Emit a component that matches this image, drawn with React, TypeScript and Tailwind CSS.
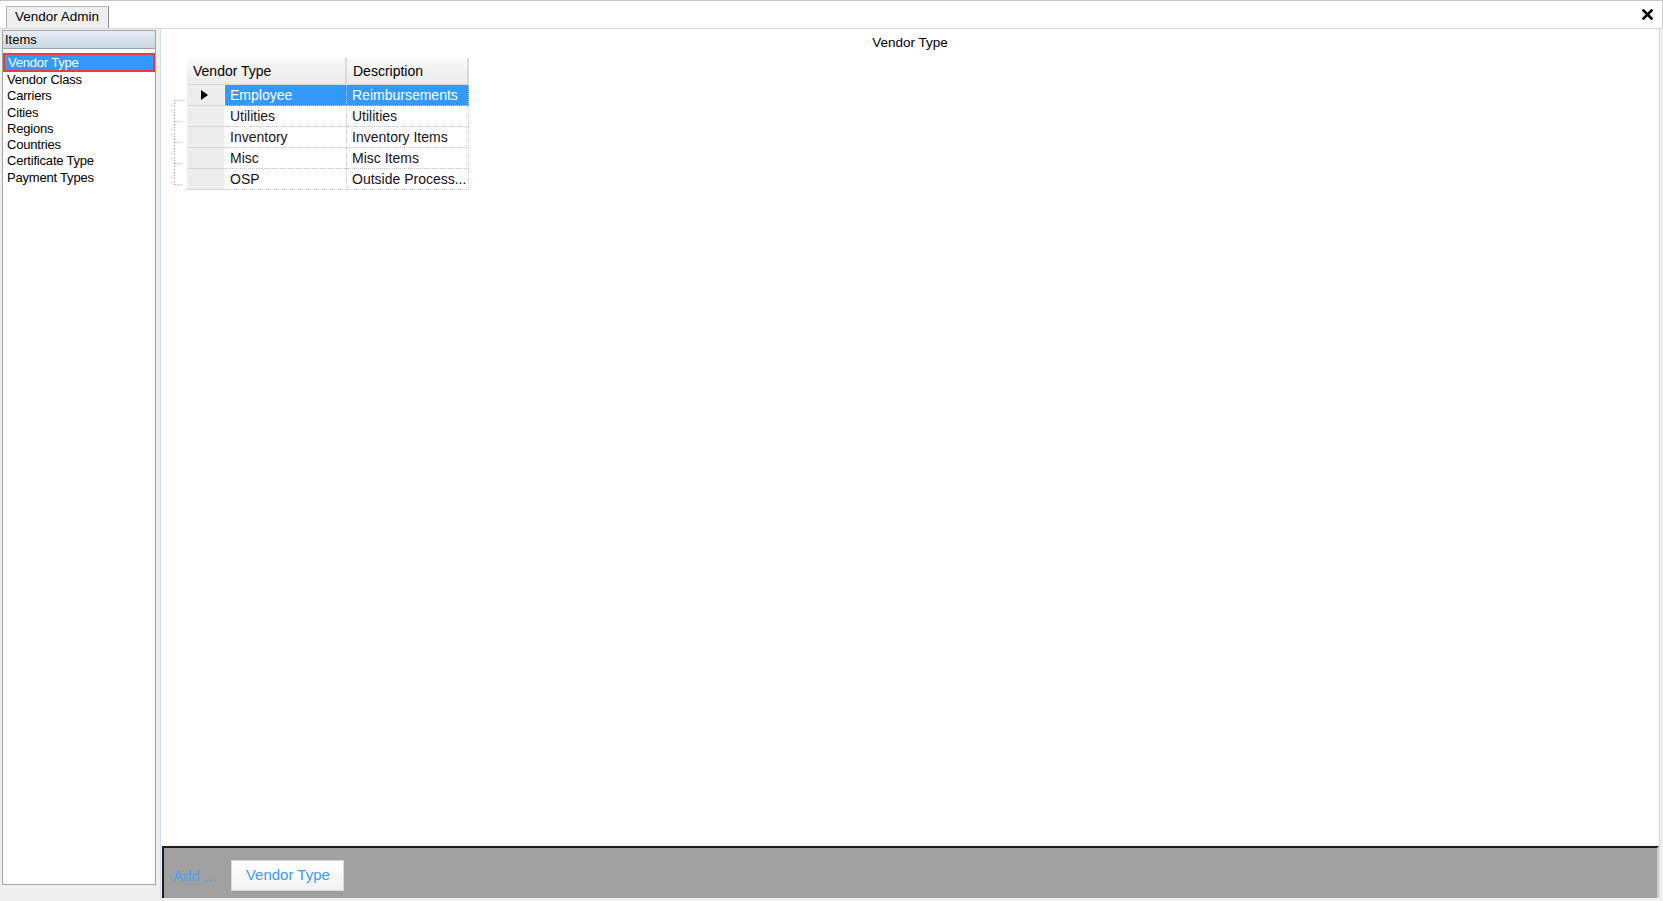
import React from 'react';

const items = [
  'Vendor Type',
  'Vendor Class',
  'Carriers',
  'Cities',
  'Regions',
  'Countries',
  'Certificate Type',
  'Payment Types',
];

const rows = [
  { type: 'Employee', desc: 'Reimbursements' },
  { type: 'Utilities', desc: 'Utilities' },
  { type: 'Inventory', desc: 'Inventory Items' },
  { type: 'Misc', desc: 'Misc Items' },
  { type: 'OSP', desc: 'Outside Process...' },
];

function TreeLines() {
  return (
    <svg width="14" height="110" className="mt-[37px] shrink-0" viewBox="0 0 14 110">
      <g stroke="#9a9a9a" strokeWidth="1" strokeDasharray="1 2" fill="none">
        <line x1="1.5" y1="5" x2="1.5" y2="90" />
        <line x1="1.5" y1="5.5" x2="13" y2="5.5" />
        <line x1="1.5" y1="26.5" x2="9" y2="26.5" />
        <line x1="1.5" y1="47.5" x2="9" y2="47.5" />
        <line x1="1.5" y1="68.5" x2="9" y2="68.5" />
        <line x1="1.5" y1="89.5" x2="9" y2="89.5" />
      </g>
    </svg>
  );
}

export default function App() {
  return (
    <div
      className="w-[1663px] h-[901px] flex flex-col bg-white border-t border-[#c4c4c4] text-black overflow-hidden"
      style={{ fontFamily: '"Liberation Sans", Arial, sans-serif' }}
    >
      {/* Tab strip */}
      <div className="h-[27px] flex items-end justify-between pl-[6px] pr-[9px] border-r border-[#cfcfcf]">
        <div className="h-[22px] w-[103px] bg-[#f0f0f0] border border-b-0 border-[#b4b4b4] border-r-[#8c8c8c] flex items-center pl-[8px] text-[13.5px]">
          Vendor Admin
        </div>
        <svg width="11" height="11" viewBox="0 0 11 11" className="self-center mb-[1px]">
          <path d="M1.5 1.5 L9.5 9.5 M9.5 1.5 L1.5 9.5" stroke="#000" strokeWidth="2.6" strokeLinecap="square" />
        </svg>
      </div>

      {/* Body */}
      <div className="flex-1 flex items-start bg-[#f0f0f0] border-t border-[#d3dce6]">
        {/* Left list panel */}
        <div className="ml-[2px] mt-[1px] w-[154px] h-[855px] bg-white border border-[#a3a3a3] flex flex-col">
          <div className="h-[18px] bg-gradient-to-b from-[#e8eef5] to-[#c9d5e2] border-b border-[#9aa4ae] pl-[2px] text-[13px] leading-[17px]">
            Items
          </div>
          <div className="mt-[4px] flex flex-col text-[13px] tracking-[-0.2px]">
            {items.map((it, i) =>
              i === 0 ? (
                <div
                  key={it}
                  className="h-[19px] bg-[#3399ff] border-2 border-[#ec3b3b] text-white pl-[3px] leading-[15px]"
                >
                  {it}
                </div>
              ) : (
                <div key={it} className="h-[16.3px] pl-[4px] leading-[16px]">
                  {it}
                </div>
              )
            )}
          </div>
        </div>

        {/* Main panel */}
        <div className="ml-[4px] w-[1500px] h-[869px] flex flex-col border-l border-r border-[#d3dce6]">
          <div className="flex-1 bg-white flex flex-col">
            <div className="pt-[6px] text-center text-[13.5px] leading-[16px]">Vendor Type</div>

            <div className="mt-[7px] ml-[12px] flex">
              <TreeLines />
              <div className="flex flex-col text-[14px]">
                {/* Header */}
                <div className="flex h-[27px] border-b border-[#d6d6d6]">
                  <div className="w-[160px] pl-[6px] flex items-center bg-gradient-to-b from-[#fafafa] to-[#ebebeb] border-r-2 border-[#dadada]">
                    Vendor Type
                  </div>
                  <div className="w-[122px] pl-[6px] flex items-center bg-gradient-to-b from-[#fafafa] to-[#ebebeb] border-r-2 border-[#dadada]">
                    Description
                  </div>
                </div>
                {/* Rows */}
                {rows.map((r, i) => {
                  const sel = i === 0;
                  return (
                    <div key={r.type} className="flex h-[21px]">
                      <div className="w-[38px] bg-[#ededed] border-b border-[#d4d4d4] border-r border-r-[#f8f8f8] flex items-center pl-[14px]">
                        {sel && (
                          <svg width="7" height="10" viewBox="0 0 7 10">
                            <polygon points="0,0 7,5 0,10" fill="#000" />
                          </svg>
                        )}
                      </div>
                      <div
                        className={`w-[122px] pl-[5px] flex items-center border-b border-r border-dotted border-[#c2c2c2] ${
                          sel ? 'bg-[#3399ff] text-white' : 'text-[#1a1020]'
                        }`}
                      >
                        {r.type}
                      </div>
                      <div
                        className={`w-[122px] pl-[5px] flex items-center border-b border-r border-dotted border-[#c2c2c2] whitespace-nowrap overflow-hidden ${
                          sel ? 'bg-[#3399ff] text-white' : 'text-[#1a1020]'
                        }`}
                      >
                        {r.desc}
                      </div>
                    </div>
                  );
                })}
              </div>
            </div>
          </div>

          {/* Footer */}
          <div className="h-[52px] ml-[1px] bg-[#a0a0a0] border-t-2 border-l-2 border-[#1c1c1c] border-r-2 border-r-[#d0d0d0] flex items-center pl-[9px] gap-[15px]">
            <span className="text-[15px] text-[#4da1f0] mt-[6px]">Add ...</span>
            <div className="mt-[4px] w-[113px] h-[31px] bg-gradient-to-b from-white to-[#f2f2f2] border border-[#d8d8d8] flex items-center justify-center text-[15px] text-[#3f9af2]">
              Vendor Type
            </div>
          </div>
        </div>
      </div>
    </div>
  );
}
